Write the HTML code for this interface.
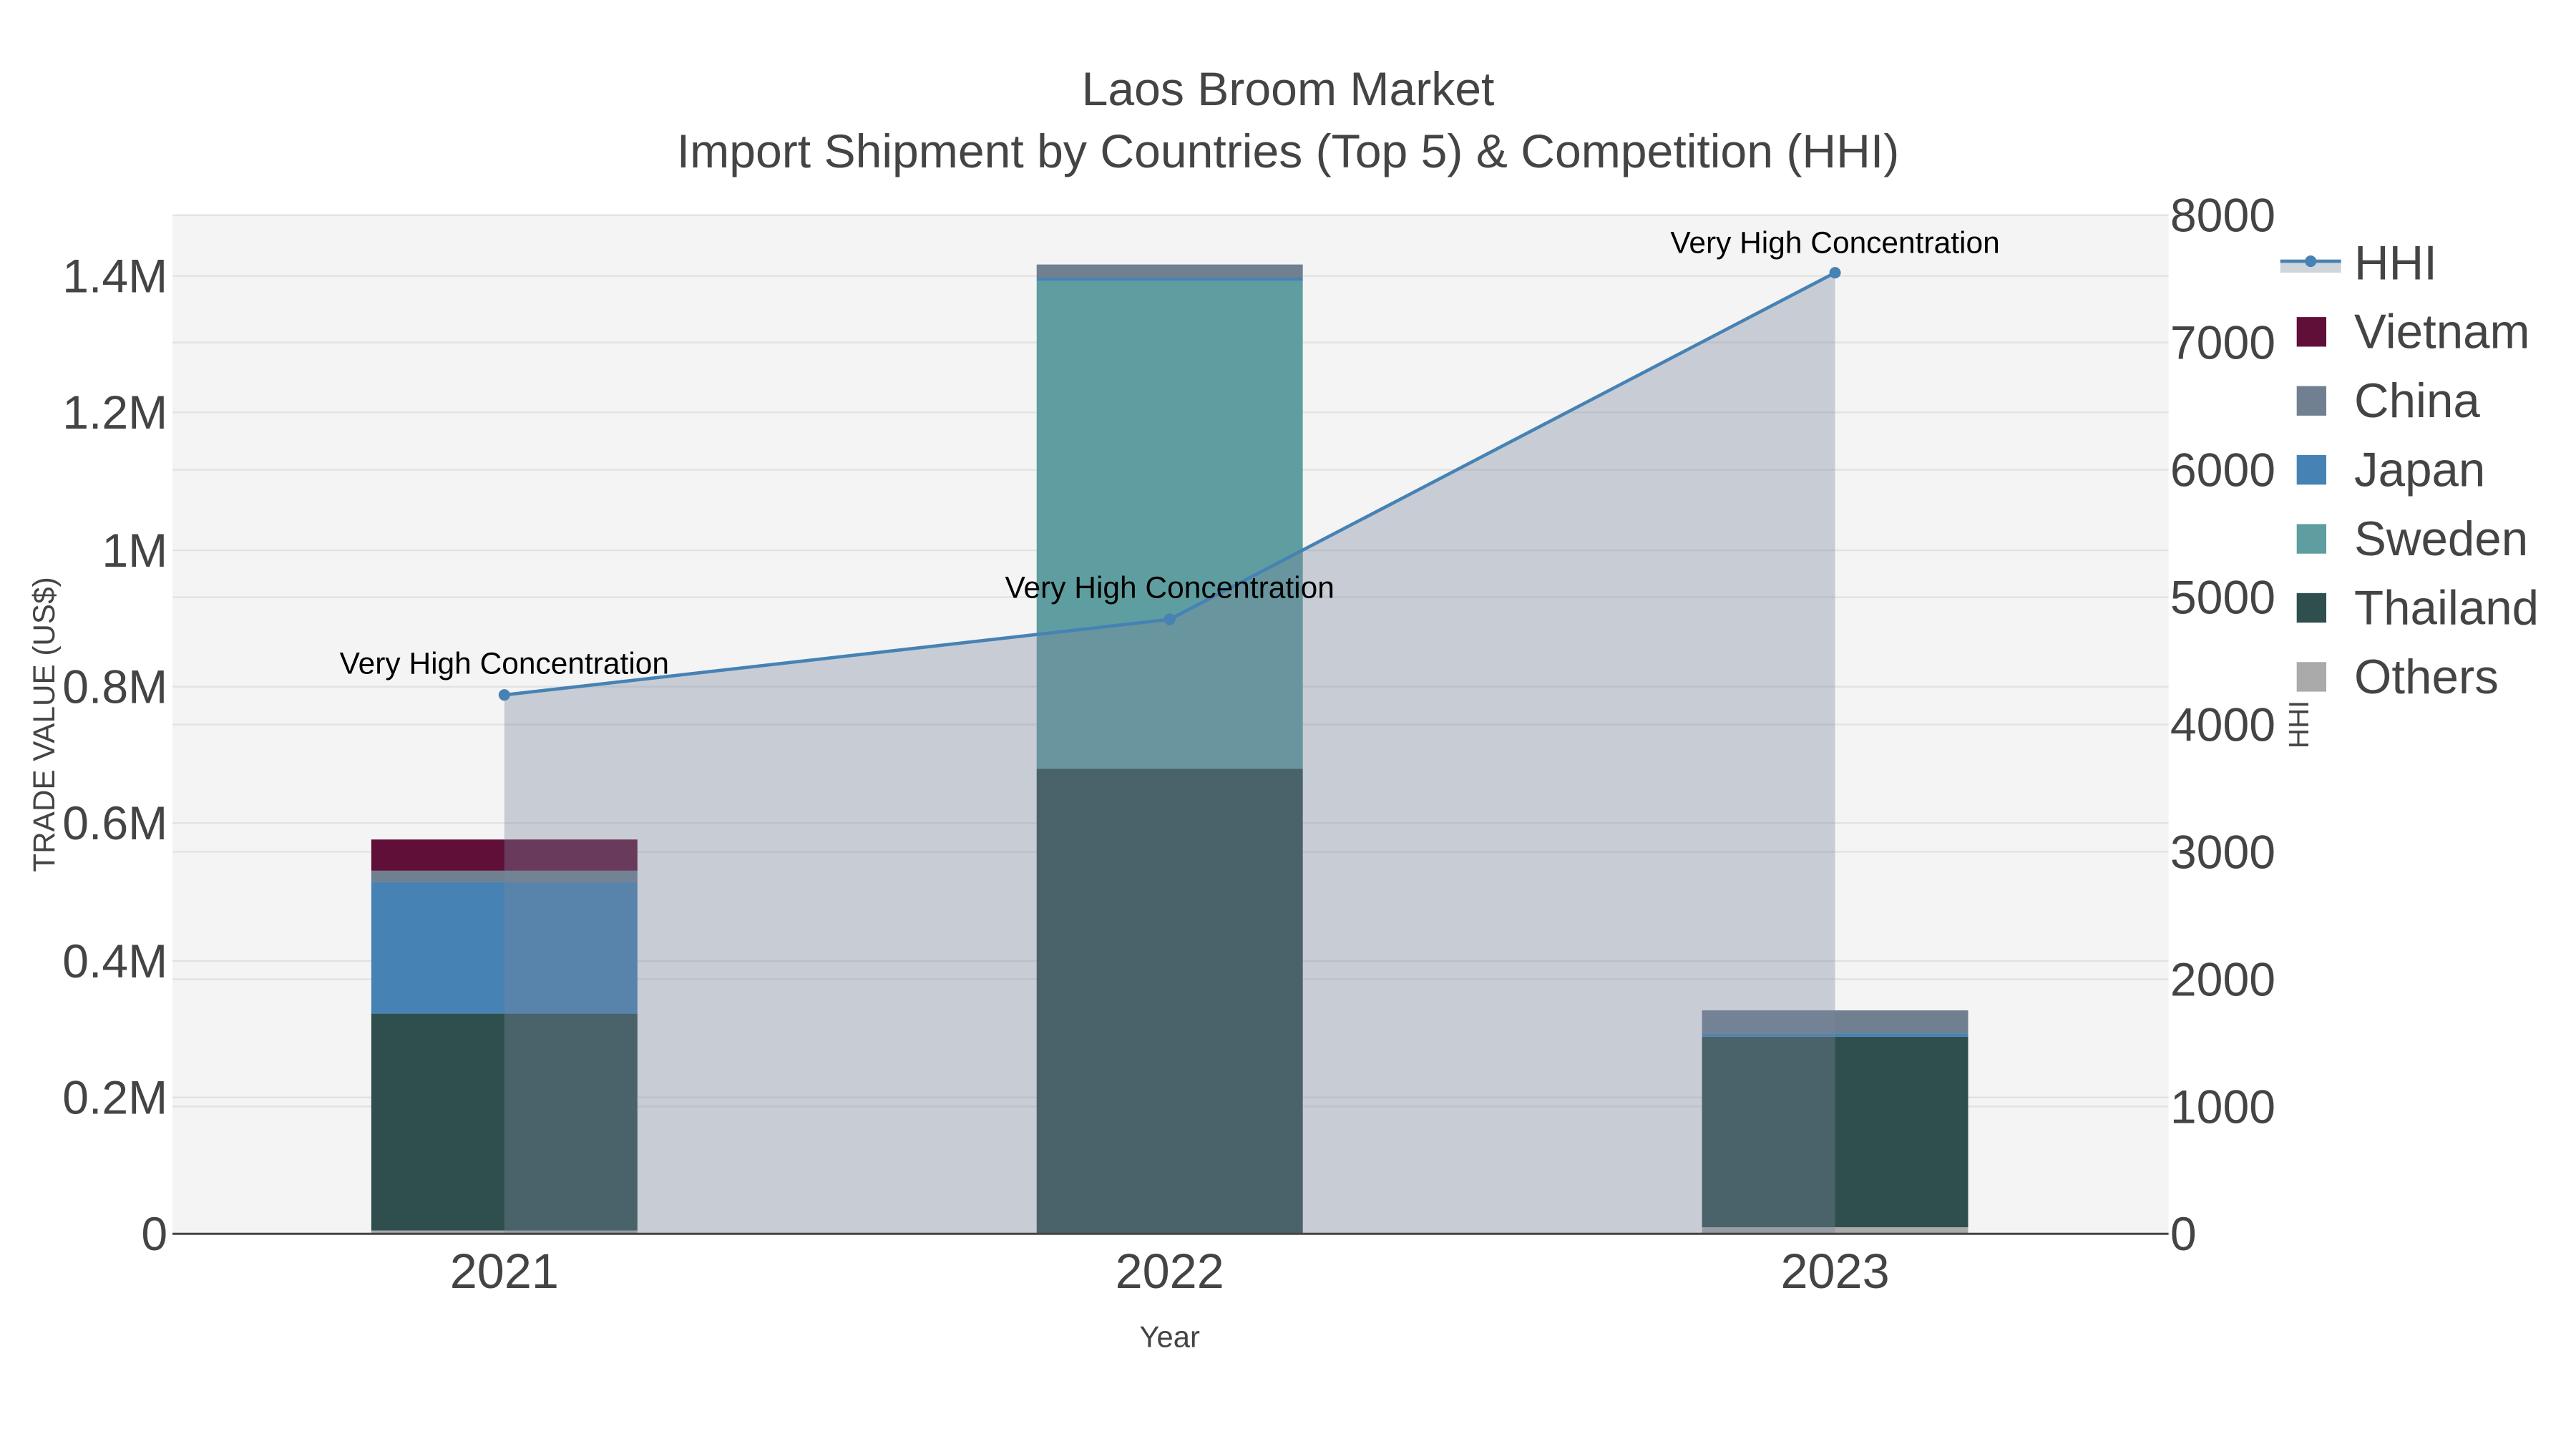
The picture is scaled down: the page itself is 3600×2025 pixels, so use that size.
<!DOCTYPE html>
<html><head><meta charset="utf-8"><style>
html,body{margin:0;padding:0;background:#fff;}
svg{display:block;font-family:"Liberation Sans",sans-serif;}
</style></head><body>
<svg width="3600" height="2025" viewBox="0 0 1568 882" preserveAspectRatio="none" xmlns="http://www.w3.org/2000/svg">
<rect width="1568" height="882" fill="#fff"/>
<rect x="105" y="131" width="1215" height="620" fill="#f4f4f4"/>
<g stroke="#e2e2e2" stroke-width="1">
<line x1="105" x2="1320" y1="668" y2="668"/><line x1="105" x2="1320" y1="585" y2="585"/>
<line x1="105" x2="1320" y1="501" y2="501"/><line x1="105" x2="1320" y1="418" y2="418"/>
<line x1="105" x2="1320" y1="335" y2="335"/><line x1="105" x2="1320" y1="251" y2="251"/>
<line x1="105" x2="1320" y1="168" y2="168"/>
<line x1="105" x2="1320" y1="673.5" y2="673.5"/><line x1="105" x2="1320" y1="596" y2="596"/>
<line x1="105" x2="1320" y1="518.5" y2="518.5"/><line x1="105" x2="1320" y1="441" y2="441"/>
<line x1="105" x2="1320" y1="363.5" y2="363.5"/><line x1="105" x2="1320" y1="286" y2="286"/>
<line x1="105" x2="1320" y1="208.5" y2="208.5"/><line x1="105" x2="1320" y1="131" y2="131"/>
</g>
<rect x="226" y="749" width="162" height="2" fill="#aaa"/>
<rect x="226" y="617" width="162" height="132" fill="#2f4f4f"/>
<rect x="226" y="537" width="162" height="80" fill="#4682b4"/>
<rect x="226" y="530" width="162" height="7" fill="#708090"/>
<rect x="226" y="511" width="162" height="19" fill="#601038"/>
<rect x="631" y="468" width="162" height="283" fill="#2f4f4f"/>
<rect x="631" y="171" width="162" height="297" fill="#5f9ea0"/>
<rect x="631" y="169" width="162" height="2" fill="#4682b4"/>
<rect x="631" y="161" width="162" height="8" fill="#708090"/>
<rect x="1036" y="747" width="162" height="4" fill="#aaa"/>
<rect x="1036" y="631" width="162" height="116" fill="#2f4f4f"/>
<rect x="1036" y="629" width="162" height="2" fill="#4682b4"/>
<rect x="1036" y="615" width="162" height="14" fill="#708090"/>
<polygon points="307,751 307,423 712,377 1117,166 1117,751" fill="rgba(122,133,156,0.36)"/>
<polyline points="307,423 712,377 1117,166" fill="none" stroke="#4682b4" stroke-width="2"/>
<circle cx="307" cy="423" r="3.5" fill="#4682b4"/><circle cx="712" cy="377" r="3.5" fill="#4682b4"/><circle cx="1117" cy="166" r="3.5" fill="#4682b4"/>
<line x1="105" x2="1320" y1="751" y2="751" stroke="#444" stroke-width="1.3"/>
<g font-size="18.5" fill="#000" text-anchor="middle">
<text x="307" y="410">Very High Concentration</text>
<text x="712" y="364">Very High Concentration</text>
<text x="1117" y="154">Very High Concentration</text>
</g>
<g fill="#444" text-anchor="middle">
<text x="784" y="64" font-size="28.8">Laos Broom Market</text>
<text x="784" y="102" font-size="28.8">Import Shipment by Countries (Top 5) &amp; Competition (HHI)</text>
<text x="307" y="784" font-size="29.8">2021</text>
<text x="712" y="784" font-size="29.8">2022</text>
<text x="1117" y="784" font-size="29.8">2023</text>
<text x="712" y="820" font-size="18.2">Year</text>
<text transform="translate(33,441) rotate(-90)" font-size="18.4">TRADE VALUE (US$)</text>
</g>
<g fill="#444" font-size="28.8" text-anchor="end">
<text x="102" y="761">0</text><text x="102" y="678">0.2M</text><text x="102" y="595">0.4M</text>
<text x="102" y="511">0.6M</text><text x="102" y="428">0.8M</text><text x="102" y="345">1M</text>
<text x="102" y="261">1.2M</text><text x="102" y="178">1.4M</text>
</g>
<g fill="#444" font-size="28.8">
<text x="1321" y="761">0</text><text x="1321" y="683.5">1000</text><text x="1321" y="606">2000</text>
<text x="1321" y="528.5">3000</text><text x="1321" y="451">4000</text><text x="1321" y="373.5">5000</text>
<text x="1321" y="296">6000</text><text x="1321" y="218.5">7000</text><text x="1321" y="141">8000</text>
</g>
<rect x="1385" y="118" width="183" height="310" fill="#fff"/>
<text transform="translate(1405,441) rotate(-90)" font-size="17" fill="#444" text-anchor="middle">HHI</text>
<rect x="1388" y="158" width="37" height="8" fill="#d0d4db"/>
<line x1="1388" x2="1425" y1="159" y2="159" stroke="#4682b4" stroke-width="2"/>
<circle cx="1406.5" cy="159" r="3.5" fill="#4682b4"/>
<rect x="1398" y="193" width="18" height="18" fill="#601038"/>
<rect x="1398" y="235" width="18" height="18" fill="#708090"/>
<rect x="1398" y="277" width="18" height="18" fill="#4682b4"/>
<rect x="1398" y="319" width="18" height="18" fill="#5f9ea0"/>
<rect x="1398" y="361" width="18" height="18" fill="#2f4f4f"/>
<rect x="1398" y="403" width="18" height="18" fill="#aaa"/>
<g fill="#444" font-size="29.3">
<text x="1433" y="170">HHI</text><text x="1433" y="212">Vietnam</text><text x="1433" y="254">China</text>
<text x="1433" y="296">Japan</text><text x="1433" y="338">Sweden</text><text x="1433" y="380">Thailand</text>
<text x="1433" y="422">Others</text>
</g>
</svg>
</body></html>
